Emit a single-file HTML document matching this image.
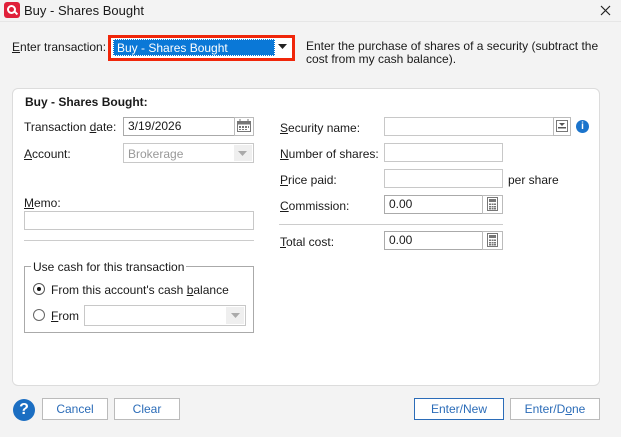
<!DOCTYPE html>
<html><head><meta charset="utf-8"><style>
*{box-sizing:border-box;margin:0;padding:0}
body{width:621px;height:437px;background:#f3f3f3;font-family:"Liberation Sans",sans-serif;font-size:12px;color:#1a1a1a;position:relative;overflow:hidden}
.a{position:absolute;white-space:nowrap}
.inp{position:absolute;background:#fff;border:1px solid #c8c8c8;padding:2px 4px;font-size:12px}
.btn{position:absolute;background:#fff;border:1px solid #bbb;color:#2b6cb8;text-align:center;font-size:12px;line-height:20px}
u{text-decoration:underline}
.cb{position:absolute;background:#fff;border:1px solid #bbb}
</style></head><body>
<div class="a" style="left:0;top:0;width:621px;height:22px;background:#f3f3f3;border-bottom:1px solid #e6e6e6"></div>
<div class="a" style="left:4px;top:2px;width:16px;height:16px;background:#e0203a;border-radius:3px"><div style="position:absolute;left:3px;top:3px;width:9px;height:9px;border:2px solid #fff;border-radius:50%"></div><div style="position:absolute;left:10px;top:10px;width:4px;height:2px;background:#fff;transform:rotate(45deg)"></div></div>
<div class="a" style="left:24px;top:3px;font-size:13px">Buy - Shares Bought</div>
<svg class="a" style="left:600px;top:5px" width="11" height="11"><path d="M1 1L10 10M10 1L1 10" stroke="#222" stroke-width="1.2"/></svg>

<div class="a" style="left:12px;top:40px"><u>E</u>nter transaction:</div>
<div class="a" style="left:108px;top:35px;width:187px;height:26px;border:3px solid #f0260a;background:#fff"></div>
<div class="a" style="left:113px;top:39px;width:162px;height:17px;background:#0a78d7;color:#fff;padding:1px 3px;border:1px dotted #fff">Buy - Shares Bought</div>
<div class="a" style="left:275px;top:39px;width:15px;height:17px;background:#fff"></div>
<svg class="a" style="left:278px;top:44px" width="9" height="6"><path d="M0 0H9L4.5 5Z" fill="#222"/></svg>
<div class="a" style="left:306px;top:40px;line-height:13px">Enter the purchase of shares of a security (subtract the<br>cost from my cash balance).</div>

<div class="a" style="left:12px;top:88px;width:588px;height:298px;background:#fff;border:1px solid #dcdcdc;border-radius:6px"></div>
<div class="a" style="left:25px;top:95px;font-weight:bold">Buy - Shares Bought:</div>

<div class="a" style="left:24px;top:120px">Transaction <u>d</u>ate:</div>
<div class="inp" style="left:123px;top:117px;width:112px;height:19px;border-color:#aaa;padding-top:1px">3/19/2026</div>
<div class="a" style="left:234px;top:117px;width:20px;height:19px;border:1px solid #bbb;background:#fff"></div>
<svg class="a" style="left:237px;top:119px" width="14" height="13"><rect x="0.5" y="2.5" width="13" height="10" fill="none" stroke="#777"/><rect x="0.5" y="2.5" width="13" height="3" fill="#777"/><path d="M3 0V3M11 0V3" stroke="#777"/><g fill="#777"><rect x="2" y="7" width="2" height="2"/><rect x="5" y="7" width="2" height="2"/><rect x="8" y="7" width="2" height="2"/><rect x="11" y="7" width="1" height="2"/><rect x="2" y="10" width="2" height="1"/><rect x="5" y="10" width="2" height="1"/><rect x="8" y="10" width="2" height="1"/></g></svg>

<div class="a" style="left:24px;top:147px"><u>A</u>ccount:</div>
<div class="inp" style="left:123px;top:143px;width:131px;height:20px;color:#999;padding-top:3px">Brokerage</div>
<div class="a" style="left:234px;top:145px;width:18px;height:16px;background:#efefef"></div>
<svg class="a" style="left:238px;top:151px" width="9" height="5"><path d="M0 0H9L4.5 5Z" fill="#aaa"/></svg>

<div class="a" style="left:24px;top:196px"><u>M</u>emo:</div>
<div class="inp" style="left:24px;top:211px;width:230px;height:19px"></div>
<div class="a" style="left:24px;top:240px;width:230px;height:1px;background:#ccc"></div>

<div class="a" style="left:24px;top:266px;width:230px;height:67px;border:1px solid #aaa"></div>
<div class="a" style="left:31px;top:260px;background:#fff;padding:0 2px">Use cash for this transaction</div>
<div class="a" style="left:33px;top:283px;width:12px;height:12px;border:1px solid #555;border-radius:50%"><div style="position:absolute;left:3px;top:3px;width:4px;height:4px;background:#111;border-radius:50%"></div></div>
<div class="a" style="left:51px;top:283px">From this account's cash <u>b</u>alance</div>
<div class="a" style="left:33px;top:309px;width:12px;height:12px;border:1px solid #666;border-radius:50%"></div>
<div class="a" style="left:51px;top:309px"><u>F</u>rom</div>
<div class="inp" style="left:84px;top:305px;width:162px;height:21px"></div>
<div class="a" style="left:226px;top:307px;width:18px;height:17px;background:#efefef"></div>
<svg class="a" style="left:231px;top:313px" width="9" height="5"><path d="M0 0H9L4.5 5Z" fill="#aaa"/></svg>

<div class="a" style="left:280px;top:121px"><u>S</u>ecurity name:</div>
<div class="inp" style="left:384px;top:117px;width:170px;height:19px"></div>
<div class="a" style="left:553px;top:117px;width:18px;height:19px;border:1px solid #bbb;background:#fff"></div>
<div class="a" style="left:556px;top:120px;width:12px;height:12px;border:1px solid #777"></div>
<svg class="a" style="left:558px;top:122px" width="8" height="8"><path d="M1 1H7L4 4Z" fill="#555"/><rect x="0" y="5" width="8" height="1.5" fill="#555"/></svg>
<div class="a" style="left:576px;top:120px;width:13px;height:13px;border-radius:50%;background:#1b74cc;color:#fff;font-weight:bold;font-size:10px;line-height:13px;text-align:center">i</div>

<div class="a" style="left:280px;top:147px"><u>N</u>umber of shares:</div>
<div class="inp" style="left:384px;top:143px;width:119px;height:19px"></div>
<div class="a" style="left:280px;top:173px"><u>P</u>rice paid:</div>
<div class="inp" style="left:384px;top:169px;width:119px;height:19px"></div>
<div class="a" style="left:508px;top:173px">per share</div>

<div class="a" style="left:280px;top:199px"><u>C</u>ommission:</div>
<div class="inp" style="left:384px;top:195px;width:99px;height:19px;border-color:#aaa;padding-top:1px">0.00</div>
<div class="a" style="left:482px;top:195px;width:21px;height:19px;border:1px solid #bbb;background:#fff"></div>
<svg class="a" style="left:487px;top:197px" width="11" height="14"><rect x="0.5" y="0.5" width="10" height="13" fill="none" stroke="#777"/><rect x="2" y="2" width="7" height="3" fill="#777"/><g fill="#777"><rect x="2" y="6.5" width="2" height="1.5"/><rect x="4.6" y="6.5" width="2" height="1.5"/><rect x="7" y="6.5" width="2" height="1.5"/><rect x="2" y="9" width="2" height="1.5"/><rect x="4.6" y="9" width="2" height="1.5"/><rect x="7" y="9" width="2" height="1.5"/><rect x="2" y="11" width="2" height="1.5"/><rect x="4.6" y="11" width="2" height="1.5"/><rect x="7" y="11" width="2" height="1.5"/></g></svg>
<div class="a" style="left:279px;top:224px;width:224px;height:1px;background:#ccc"></div>

<div class="a" style="left:280px;top:235px"><u>T</u>otal cost:</div>
<div class="inp" style="left:384px;top:231px;width:99px;height:19px;border-color:#aaa;padding-top:1px">0.00</div>
<div class="a" style="left:482px;top:231px;width:21px;height:19px;border:1px solid #bbb;background:#fff"></div>
<svg class="a" style="left:487px;top:233px" width="11" height="14"><rect x="0.5" y="0.5" width="10" height="13" fill="none" stroke="#777"/><rect x="2" y="2" width="7" height="3" fill="#777"/><g fill="#777"><rect x="2" y="6.5" width="2" height="1.5"/><rect x="4.6" y="6.5" width="2" height="1.5"/><rect x="7" y="6.5" width="2" height="1.5"/><rect x="2" y="9" width="2" height="1.5"/><rect x="4.6" y="9" width="2" height="1.5"/><rect x="7" y="9" width="2" height="1.5"/><rect x="2" y="11" width="2" height="1.5"/><rect x="4.6" y="11" width="2" height="1.5"/><rect x="7" y="11" width="2" height="1.5"/></g></svg>

<div class="a" style="left:13px;top:399px;width:22px;height:22px;border-radius:50%;background:#1b6ec2;color:#fff;font-weight:bold;font-size:16px;line-height:22px;text-align:center">?</div>
<div class="btn" style="left:42px;top:398px;width:66px;height:22px">Cancel</div>
<div class="btn" style="left:114px;top:398px;width:66px;height:22px">Clear</div>
<div class="btn" style="left:414px;top:398px;width:90px;height:22px;border-color:#2b6cb8">Enter/New</div>
<div class="btn" style="left:510px;top:398px;width:90px;height:22px">Enter/D<u>o</u>ne</div>
</body></html>
